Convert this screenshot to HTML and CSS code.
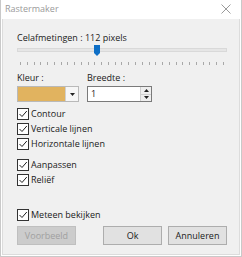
FILE: index.html
```html
<!DOCTYPE html>
<html lang="nl">
<head>
  <meta charset="UTF-8">
  <title>Rastermaker</title>
  <link rel="stylesheet" href="styles.css">
</head>
<body>
  <div class="window">
    <div class="titlebar">
      <span class="title">Rastermaker</span>
      <svg class="close" width="10" height="10" viewBox="0 0 10 10"><path d="M0.5 0.5L9.5 9.5M9.5 0.5L0.5 9.5" stroke="#9a9a9a" stroke-width="1"/></svg>
    </div>

    <div class="content">
      <div class="size-label">Celafmetingen : 112 pixels</div>

      <div class="slider">
        <div class="track"></div>
        <svg class="thumb" width="6" height="11" viewBox="0 0 6 11"><path d="M0 0H6V8L3 11L0 8Z" fill="#0f6fc6"/></svg>
      </div>
      <div class="ticks" id="ticks"></div>

      <div class="fields">
        <div class="field">
          <label>Kleur :</label>
          <div class="colorbox">
            <div class="swatch"></div>
            <div class="drop"><svg width="5" height="3" viewBox="0 0 5 3"><path d="M0 0H5L2.5 3Z" fill="#222"/></svg></div>
          </div>
        </div>
        <div class="field">
          <label>Breedte :</label>
          <div class="spinbox">
            <span class="value">1</span>
            <div class="spin">
              <div class="spin-btn"><svg width="5" height="3" viewBox="0 0 5 3"><path d="M0 3H5L2.5 0Z" fill="#222"/></svg></div>
              <div class="spin-btn"><svg width="5" height="3" viewBox="0 0 5 3"><path d="M0 0H5L2.5 3Z" fill="#222"/></svg></div>
            </div>
          </div>
        </div>
      </div>

      <div class="group first">
        <div class="check"><span class="box"></span>Contour</div>
        <div class="check"><span class="box"></span>Verticale lijnen</div>
        <div class="check"><span class="box"></span>Horizontale lijnen</div>
      </div>
      <div class="group">
        <div class="check"><span class="box"></span>Aanpassen</div>
        <div class="check"><span class="box"></span>Reliëf</div>
      </div>
      <div class="group preview">
        <div class="check"><span class="box"></span>Meteen bekijken</div>
      </div>

      <div class="buttons">
        <button class="btn disabled">Voorbeeld</button>
        <span class="spacer"></span>
        <button class="btn">Ok</button>
        <button class="btn">Annuleren</button>
      </div>
    </div>
  </div>

  <script>
    // 31 tick marks, one every 10 of 300
    var ticks = document.getElementById("ticks");
    for (var i = 0; i <= 30; i++) {
      var t = document.createElement("span");
      t.className = "tick";
      ticks.appendChild(t);
    }
  </script>
</body>
</html>
```

FILE: styles.css
```css
* { margin: 0; padding: 0; box-sizing: border-box; }
html, body {
  width: 100%;
  height: 100%;
  background: #ffffff;
  font-family: "Open Sans", "Noto Sans", sans-serif;
  font-size: 9px;
  color: #1a1a1a;
  overflow: hidden;
}
.window {
  width: 242px;
  height: 257px;
  display: flex;
  flex-direction: column;
  border: 1px solid #c9c9c9;
  border-top: none;
}
.titlebar {
  height: 19px;
  background: #ffffff;
  display: flex;
  align-items: center;
  justify-content: space-between;
  padding: 0 10px 2px 4px;
}
.title {
  color: #9a9a9a;
  font-size: 9px;
}
.content {
  flex: 1;
  background: #f0f0f0;
  border: 1px solid #dcdcdc;
  border-top: none;
  margin: 0 1px 1px;
  padding: 13px 12px 0 14px;
  display: flex;
  flex-direction: column;
}
.size-label {
  height: 12px;
  line-height: 12px;
}
.slider {
  position: relative;
  height: 12px;
  display: flex;
  align-items: center;
}
.track {
  width: 100%;
  height: 4px;
  background: #e6e6e6;
  border: 1px solid #d9d9d9;
}
.thumb {
  position: absolute;
  left: 77px;
  top: 1px;
}
.ticks {
  margin-top: 6px;
  height: 3px;
  display: flex;
  justify-content: space-between;
  padding: 0 3px;
}
.tick {
  width: 1px;
  height: 3px;
  background: #a8a8a8;
}
.fields {
  display: flex;
  gap: 8px;
  margin-top: 7px;
}
.field {
  display: flex;
  flex-direction: column;
}
.field label {
  height: 12px;
  line-height: 12px;
  margin-bottom: 2px;
}
.colorbox {
  width: 62px;
  height: 16px;
  display: flex;
  border: 1px solid #b9b9b9;
  background: #ffffff;
}
.swatch {
  flex: 1;
  background: #e1b35f;
  border-right: 1px solid #d0d0d0;
}
.drop {
  width: 12px;
  display: flex;
  align-items: center;
  justify-content: center;
  background: #f6f6f6;
}
.spinbox {
  width: 65px;
  height: 16px;
  display: flex;
  border: 1px solid #7a7a7a;
  background: #ffffff;
}
.spinbox .value {
  flex: 1;
  padding-left: 3px;
  line-height: 14px;
}
.spin {
  width: 11px;
  display: flex;
  flex-direction: column;
  border-left: 1px solid #d0d0d0;
}
.spin-btn {
  flex: 1;
  display: flex;
  align-items: center;
  justify-content: center;
  background: #efefef;
}
.spin-btn + .spin-btn { border-top: 1px solid #d0d0d0; }
.group {
  display: flex;
  flex-direction: column;
  margin-top: 6px;
}
.group.first { margin-top: 4px; }
.group.preview { margin-top: 20px; }
.check {
  display: flex;
  align-items: center;
  height: 15px;
  line-height: 15px;
}
.box {
  width: 12px;
  height: 12px;
  margin-right: 2px;
  border: 1px solid #333333;
  background: #ffffff url("data:image/svg+xml;utf8,<svg xmlns='http://www.w3.org/2000/svg' width='10' height='10'><path d='M1.5 5L4 7.5L8.8 2' fill='none' stroke='%23222' stroke-width='1'/></svg>") no-repeat center;
}
.buttons {
  display: flex;
  gap: 6px;
  margin-top: 4px;
}
.spacer { flex: 1; }
.btn {
  width: 59px;
  height: 19px;
  font-family: inherit;
  font-size: 9px;
  color: #1a1a1a;
  background: #e1e1e1;
  border: 1px solid #adadad;
}
.btn.disabled {
  color: #a0a0a0;
  background: #cccccc;
  border-color: #bfbfbf;
}
```
